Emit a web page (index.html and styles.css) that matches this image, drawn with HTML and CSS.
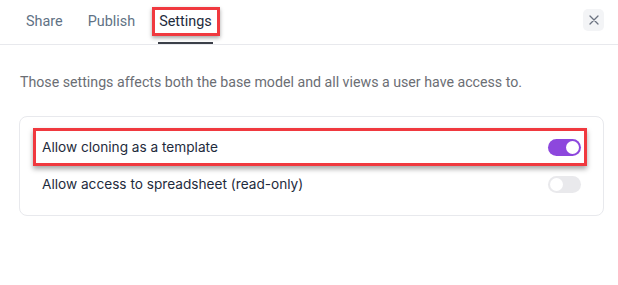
FILE: index.html
```html
<!DOCTYPE html>
<html>
<head>
<meta charset="utf-8">
<link rel="stylesheet" href="styles.css">
</head>
<body>
<div class="modal">
  <div class="header">
    <div class="tabs">
      <div class="tab">Share</div>
      <div class="tab">Publish</div>
      <div class="tab active"><span class="mark">Settings</span></div>
    </div>
    <button class="close" aria-label="Close">
      <svg width="10" height="10" viewBox="0 0 10 10"><path d="M1 1L9 9M9 1L1 9" stroke="#6b7280" stroke-width="1.3" stroke-linecap="round"/></svg>
    </button>
  </div>
  <p class="desc">Those settings affects both the base model and all views a user have access to.</p>
  <div class="card">
    <div class="row highlight">
      <span class="label">Allow cloning as a template</span>
      <span class="toggle on"><span class="knob"></span></span>
    </div>
    <div class="row">
      <span class="label">Allow access to spreadsheet (read-only)</span>
      <span class="toggle"><span class="knob"></span></span>
    </div>
  </div>
</div>
</body>
</html>
```

FILE: styles.css
```css
* { box-sizing: border-box; }
html, body { margin: 0; padding: 0; background: #fff; }
body { font-family: Roboto, "Liberation Sans", sans-serif; font-size: 14.4px; color: #1f2937; }
.modal { width: 618px; height: 285px; }
.header {
  height: 45px;
  border-bottom: 1px solid #e8e9ed;
  display: flex;
  align-items: flex-start;
  justify-content: space-between;
  padding: 0 14px 0 26px;
}
.tabs { display: flex; gap: 25px; height: 44px; }
.tab {
  height: 44px;
  display: flex;
  align-items: center;
  color: #5f7285;
  font-size: 14.4px;
  padding-bottom: 2px;
  position: relative;
}
.tab.active { color: #1e2b3c; margin-left: -1px; }
.tab.active::after {
  content: "";
  position: absolute;
  left: -1px; right: -1px; bottom: 0;
  height: 2px;
  background: #3b3f48;
}
.mark {
  position: relative;
}
.mark::before {
  content: "";
  position: absolute;
  left: -7px; right: -8px; top: -6px; bottom: -6px;
  border: 3px solid #f0393f;
  box-shadow: 0 2px 4px rgba(0,0,0,0.35);
}
.close {
  margin-top: 9px;
  width: 21px; height: 22px;
  border: none;
  border-radius: 5px;
  background: #f3f4f6;
  display: flex; align-items: center; justify-content: center;
  padding: 0;
}
.desc {
  margin: 0;
  padding: 28px 20px 0 20px;
  color: #6b6e74;
  font-size: 14.2px;
  line-height: 18px;
}
.card {
  margin: 25px 14px 0 19px;
  height: 100px;
  border: 1px solid #e8e9ed;
  border-radius: 8px;
  padding: 11px 16px 0 13px;
}
.row {
  display: flex;
  align-items: center;
  justify-content: space-between;
  height: 38px;
  padding: 0 6px 0 9px;
}
.row + .row { height: 36px; }
.row.highlight {
  border: 3px solid #f0393f;
  box-shadow: 0 3px 5px rgba(0,0,0,0.35);
  padding: 0 3px 0 6px;
}
.label { font-family: Inter, Roboto, sans-serif; color: #1e2b3c; font-size: 13.65px; }
.toggle {
  width: 33px; height: 17px;
  border-radius: 9px;
  background: #e9e9ec;
  position: relative;
  display: inline-block;
}
.toggle .knob {
  position: absolute;
  top: 2px; left: 2px;
  width: 13px; height: 13px;
  border-radius: 50%;
  background: #fff;
}
.toggle.on { background: #8d47dd; }
.toggle.on .knob { left: 18px; }
```
